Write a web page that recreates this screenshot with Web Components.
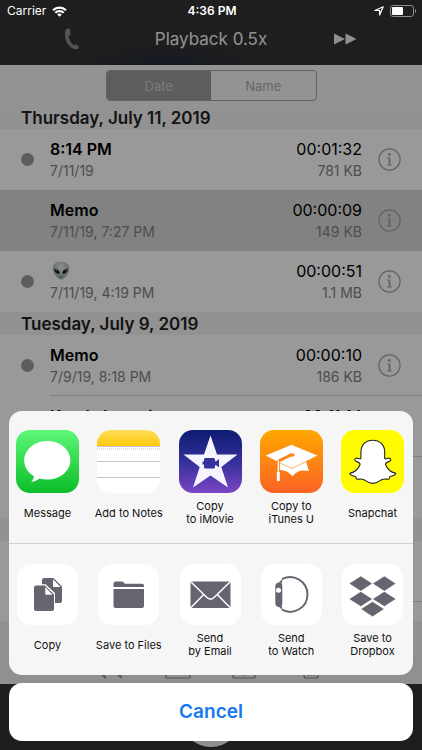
<!DOCTYPE html>
<html lang="en">
<head>
<meta charset="utf-8">
<meta name="viewport" content="width=device-width, initial-scale=1">
<title>Voice Memos</title>
<style>
  body {
    margin: 0;
    font-family: Inter, "Liberation Sans", sans-serif;
    background: #333;
  }
</style>
</head>
<body>
<memo-app></memo-app>

<script>
/**
 * Small base class: puts the element's markup into an open shadow root.
 */
class BaseElement extends HTMLElement {
  connectedCallback() {
    if (this.shadowRoot) return;
    this.attachShadow({ mode: "open" });
    this.shadowRoot.innerHTML = `
      <style>
        * { box-sizing: border-box; }
        button { font: inherit; color: inherit; background: none; border: 0; padding: 0; margin: 0; cursor: pointer; }
        svg { display: block; }
      </style>
      ${this.render()}
    `;
  }

  render() {
    return "";
  }
}

class StatusBar extends BaseElement {
  render() {
    return `
      <style>
        :host {
          display: grid;
          grid-template-columns: 1fr auto 1fr;
          align-items: center;
          height: 22px;
          padding: 0 5px 0 7px;
          color: #fff;
          font-size: 12px;
          line-height: 16px;
        }
        .left, .right { display: flex; align-items: center; gap: 6px; }
        .right { justify-content: flex-end; }
        b { font-weight: 600; }
      </style>
      <div class="left">
        <span>Carrier</span>
        <svg width="15" height="11" viewBox="0 0 15 11" fill="none" stroke="#fff" stroke-width="2.200">
          <path d="M1 4.2A9.3 9.3 0 0 1 14 4.2"/>
          <path d="M3.3 6.8A6 6 0 0 1 11.7 6.8"/>
          <path d="M7.5 10.8 5.2 8.5A3.3 3.3 0 0 1 9.8 8.5Z" fill="#fff" stroke="none"/>
        </svg>
      </div>
      <b>4:36 PM</b>
      <div class="right">
        <svg width="10" height="10" viewBox="0 0 10 10" fill="none" stroke="#fff" stroke-width="1.2" stroke-linejoin="round">
          <path d="M9.2.8 5.6 9.1V4.5H.9Z"/>
        </svg>
        <svg width="27" height="12" viewBox="0 0 27 12">
          <rect x=".5" y=".5" width="23" height="11" rx="2.6" fill="none" stroke="#8e8e8e"/>
          <rect x="2" y="2" width="11" height="8" rx="1" fill="#fff"/>
          <path d="M25 4v4c1.6-.6 1.6-3.4 0-4Z" fill="#8e8e8e"/>
        </svg>
      </div>
    `;
  }
}

class PlaybackHeader extends BaseElement {
  render() {
    return `
      <style>
        :host {
          display: block;
          padding: 22px 8px 0;
          height: 65px;
          box-sizing: border-box;
          background: radial-gradient(100px 22px at 40% 100%, #252b38, #333) #333;
          color: #eee;
        }
        nav {
          display: grid;
          grid-template-columns: 1fr 1fr 1fr;
          place-items: center;
          height: 34px;
        }
        .title { font-size: 17px; line-height: 22px; white-space: nowrap; color: #f2f2f2; }
      </style>
      <nav>
        <button aria-label="Earpiece">
          <svg width="24" height="24" viewBox="0 0 24 24" fill="#8c8c8c">
            <path d="M2 2.500C3.200 1.400 5.600 1 6.100 3L6.700 7C6.900 8.400 4.900 8.500 4.600 9.500C4.900 12.500 7.300 16.300 9.500 18.200C10.600 18.500 11.300 16.900 12.400 17.400L14.700 19.400C15.400 20.400 14.500 21.700 13 22.100C9.800 22.800 5.900 20.300 3.500 16.500C.8 12.200.1 5.500 2 2.500Z"/>
          </svg>
        </button>
        <button class="title">Playback 0.5x</button>
        <button aria-label="Fast forward">
          <svg width="24" height="12" viewBox="0 0 24 12" fill="#f0f0f0"><path d="M0 .5 11 6 0 11.500ZM11.500 .5 22.500 6 11.500 11.500Z"/></svg>
        </button>
      </nav>
    `;
  }
}

class SortControl extends BaseElement {
  render() {
    return `
      <style>
        :host { display: flex; justify-content: center; padding: 5px 0; height: 41px; box-sizing: border-box; background: #f5f5f5; }
        div { display: flex; width: 50%; border: 1px solid #a3a3a3; border-radius: 4px; overflow: hidden; }
        button { flex: 1; font-size: 13px; line-height: 16px; color: #adadad; }
        button[aria-pressed="true"] { background: #9c9c9c; color: #cbcbcb; }
      </style>
      <div>
        <button aria-pressed="true">Date</button>
        <button aria-pressed="false">Name</button>
      </div>
    `;
  }
}

class DayHeader extends BaseElement {
  render() {
    return `
      <style>
        :host {
          display: block;
          height: 23px;
          padding: 0 21px;
          background: #f3f3f3;
          color: #222;
          font-size: 17px;
          font-weight: 600;
          line-height: 24px;
          white-space: nowrap;
        }
      </style>
      <slot></slot>
    `;
  }
}

/**
 * One recording. Attributes: date, time, size, and the flags "unplayed", "selected" and "line".
 */
class MemoRow extends BaseElement {
  render() {
    const attr = (name) => this.getAttribute(name) || "";

    return `
      <style>
        :host {
          display: grid;
          grid-template-columns: 50px 1fr auto 60px;
          align-items: center;
          height: 61px;
          background: #fff;
          color: #000;
          font-size: 16px;
          line-height: 22px;
        }
        :host([selected]) { background: #d9d9d9; }
        :host([line]) { background: linear-gradient(#d2d2d2, #d2d2d2) 50px 100% / 100% 1px no-repeat #fff; }
        .dot { width: 13px; height: 13px; margin-left: 21px; border-radius: 50%; }
        :host([unplayed]) .dot { background: #9b9b9b; }
        .name { font-weight: 600; height: 22px; }
        .right { text-align: right; }
        .small { min-height: 22px; font-size: 14px; color: #828282; }
        button { margin-left: 16px; width: 23px; color: #a6a6a6; }
      </style>
      <span class="dot"></span>
      <div>
        <div class="name"><slot></slot></div>
        <div class="small">${attr("date")}</div>
      </div>
      <div class="right">
        <div>${attr("time")}</div>
        <div class="small">${attr("size")}</div>
      </div>
      <button aria-label="Details">
        <svg width="23" height="23" viewBox="0 0 23 23" fill="currentColor">
          <circle cx="11.500" cy="11.500" r="10.600" fill="none" stroke="currentColor" stroke-width="1.200"/>
          <circle cx="11.300" cy="6.400" r="1.400"/>
          <path d="M9 9.400h3.400v7.100h1.500v1H9v-1h1.600v-6.100H9Z"/>
        </svg>
      </button>
    `;
  }
}

class AlienFace extends BaseElement {
  render() {
    return `
      <style>:host { display: inline-block; padding: 1px 0 0 2px; }</style>
      <svg width="18" height="19" viewBox="0 0 18 19" role="img" aria-label="Alien">
        <defs><radialGradient id="skin" cy=".3"><stop stop-color="#e8efef"/><stop offset="1" stop-color="#a9b6b8"/></radialGradient></defs>
        <path d="M9 .5c5 0 8.300 3 8.300 7.200C17.300 12 12.500 18.500 9 18.500S.7 12 .7 7.700C.7 3.500 4 .5 9 .5Z" fill="url(#skin)"/>
        <path d="M2.300 7.800c3 .2 5 1.800 5.400 4.800-3.200.5-5.500-1.300-5.400-4.800ZM15.700 7.800c-3 .2-5 1.800-5.400 4.800 3.200.5 5.500-1.300 5.400-4.800Z" fill="#111"/>
        <path d="M3.500 9l1.500.8M14.500 9l-1.500.8" stroke="#ccc" stroke-width=".8"/>
        <path d="M7.300 15.600q1.700.9 3.400 0" fill="none" stroke="#555" stroke-width=".8"/>
      </svg>
    `;
  }
}

class EditToolbar extends BaseElement {
  render() {
    return `
      <style>
        :host {
          display: flex;
          justify-content: space-between;
          align-items: flex-end;
          height: 63px;
          padding: 0 98px 5px;
          box-sizing: border-box;
          background: #f0f0f0;
          color: #888;
        }
        svg { fill: none; stroke: currentColor; stroke-width: 1.200; }
      </style>
      <button aria-label="Trim"><svg width="26" height="26" viewBox="0 0 26 26"><path d="M3 21 7 25V3M23 25V3M17 19 23 25M3 21h4"/></svg></button>
      <button aria-label="Share"><svg width="26" height="26" viewBox="0 0 26 26"><rect x="1" y="21.500" width="24" height="3.500" rx="1"/><path d="M13 18V2M8 7l5-5 5 5"/></svg></button>
      <button aria-label="Add"><svg width="26" height="26" viewBox="0 0 26 26"><rect x="2" y="5" width="22" height="20" rx="1"/><path d="M13 10v13M7 17h12"/></svg></button>
      <button aria-label="Delete"><svg width="26" height="26" viewBox="0 0 26 26"><path d="M5 6h16M6 6v17q0 2 2 2h10q2 0 2-2V6M10 10v13M13 10v13M16 10v13"/></svg></button>
    `;
  }
}

class RecordBar extends BaseElement {
  render() {
    return `
      <style>
        :host { display: flex; justify-content: center; align-items: center; height: 66px; background: #333; }
        button { width: 60px; height: 60px; border-radius: 50%; background: #f0f0f0; }
      </style>
      <button aria-label="Record"></button>
    `;
  }
}

const ICONS = {
  message: `
    <defs><linearGradient id="g" x2="0" y2="1"><stop stop-color="#5ff777"/><stop offset="1" stop-color="#0bbd29"/></linearGradient></defs>
    <rect width="63" height="63" fill="url(#g)"/>
    <path d="M31.300 11C18.500 11 8.200 19.700 8.200 30.500c0 6.600 3.900 12.200 9.700 15.700-.2 2.400-1.200 4.100-2.900 5.600 3.400-.1 6.200-1.200 8.500-3.200 2.500.7 5.100 1 7.800 1 12.800 0 23.100-8.600 23.100-19.300S44.100 11 31.300 11Z" fill="#fff"/>`,
  notes: `
    <defs><linearGradient id="g" x2="0" y2="1"><stop stop-color="#ffdc5a"/><stop offset="1" stop-color="#fdca0a"/></linearGradient></defs>
    <rect width="63" height="63" fill="#fff"/>
    <rect width="63" height="16" fill="url(#g)"/>
    <path d="M0 16.500h63M0 31.500h63M0 47.500h63" stroke="#c6c6ca"/>
    <path d="M0 19h63" stroke="#b9b9bc" stroke-dasharray="1 1"/>`,
  imovie: `
    <defs><linearGradient id="g" x2="0" y2="1"><stop stop-color="#0c1b70"/><stop offset=".5" stop-color="#35309a"/><stop offset="1" stop-color="#7a45c4"/></linearGradient></defs>
    <rect width="63" height="63" fill="url(#g)"/>
    <path d="M31.500 5.500 38 24.500H58.500L42.300 37 49 57.500 31.500 45.500 14 57.500 20.700 37 4.500 24.500H25Z" fill="#f6f5ff"/>
    <path d="M26.500 28h8q1.500 0 1.500 1.500v1.700h1.200l2.800-2.200v8.500l-2.800-2.200H36V37q0 1.500-1.500 1.500h-8Q25 38.500 25 37v-2.500h-1.500v-3H25v-2Q25 28 26.500 28Z" fill="#35329c"/>`,
  itunesu: `
    <defs><linearGradient id="g" x2="0" y2="1"><stop stop-color="#ffa800"/><stop offset="1" stop-color="#fb6225"/></linearGradient></defs>
    <rect width="63" height="63" fill="url(#g)"/>
    <path d="M17 31 32 38 46 31.500 49 41C41.500 39.500 36.500 41 32.500 46.500 29 41.500 24 39.500 17 40Z" fill="#fff"/>
    <path d="M31.500 14.500 5 25.500 18 32 32 38.500 58 25.500Z" fill="#fff" stroke="#fd8612" stroke-width=".6"/>
    <path d="M31 25 19.500 30.500Q18.300 31.200 18.300 33V42" fill="none" stroke="#fd8516" stroke-width="3"/>
    <path d="M19 31Q18.300 31.500 18.300 33V42" fill="none" stroke="#fff" stroke-width="1.300"/>
    <path d="M30 25.200 20 30" stroke="#fd8516" stroke-width="1.600"/>
    <ellipse cx="31.500" cy="25" rx="3.200" ry="1.700" fill="#fd8516"/>
    <path d="M16.800 42h3v9h-3Z" fill="#fff"/>`,
  snapchat: `
    <rect width="63" height="63" fill="#fffc00"/>
    <path d="M31.800 10.200c7 0 11.900 4.700 11.900 12v6.300c1.600.8 3-.8 4.800-.3 2 .7 1.500 2.600-.5 3.400-1.700.7-3.900 1.200-3.400 3.200 1.600 4.200 5.400 7.400 10.200 8.600-.4 2.300-3.700 2.600-5.800 3.100-.6.7-.3 2.200-1.200 2.600-1.700.4-4-.6-6.500.3-3 1.400-5 4-9.500 4s-6.500-2.600-9.500-4c-2.500-.9-4.800.1-6.500-.3-.9-.4-.6-1.900-1.200-2.600-2.100-.5-5.400-.8-5.800-3.100 4.800-1.200 8.600-4.400 10.200-8.600.5-2-1.700-2.500-3.400-3.200-2-.8-2.500-2.700-.5-3.400 1.800-.5 3.200 1.100 4.800.3v-6.300c0-7.300 4.900-12 11.900-12Z" fill="#fff" stroke="#222" stroke-width="1.100" stroke-linejoin="round"/>`,
  copy: `
    <path d="M25 19V16q0-2 2-2h9.500L45 22.500V37q0 2-2 2H38V29L28.500 20.200H25Z" fill="#66646f"/>
    <path d="M36 15.200V23H43.500Z" fill="#fff"/>
    <path d="M19 21.500h9l9 9V45q0 2-2 2H19q-2 0-2-2V23.500q0-2 2-2Z" fill="#66646f"/>
    <path d="M28.300 23V30.800H35.500Z" fill="#fff"/>`,
  files: `
    <path d="M15.500 23V19.500q0-2 2-2h6.300q1.200 0 2 1l1 1.200H44q2 0 2 2V23Z" fill="#66646f"/>
    <path d="M15.500 25H46V42q0 2-2 2H17.500q-2 0-2-2Z" fill="#66646f"/>`,
  email: `
    <rect x="10.500" y="17.500" width="40" height="26.500" fill="#66646f"/>
    <path d="M10.500 17.500 26.700 33.300Q30.500 37 34.300 33.300L50.500 17.500M10.500 44 23.500 30.800M50.500 44 37.500 30.800" fill="none" stroke="#fff" stroke-width="1.500"/>`,
  watch: `
    <path d="M21 15.200A17.300 17.300 0 1 1 21 45.700" fill="none" stroke="#66646f" stroke-width="1.900"/>
    <path d="M21.500 15 17.500 18.800H21ZM21.500 46 17.500 42.500H21Z" fill="#66646f"/>
    <path d="M17.500 18.500H20Q21.300 19.500 21.300 22V39.500Q21.300 42 20 43H17.500Q14.300 42.500 14.300 39V22.500Q14.300 19 17.500 18.500Z" fill="#66646f"/>
    <circle cx="17.500" cy="26.300" r="2.500" fill="#fff"/>`,
  dropbox: `
    <path d="M18.800 12 30.500 19.600 18.800 27.200 7 19.600ZM42.300 12 54 19.600 42.300 27.200 30.500 19.600ZM18.800 27.400 30.500 35 18.800 42.600 7 35ZM42.300 27.400 54 35 42.300 42.600 30.500 35ZM30.500 37.500 42.300 45 30.500 52.800 18.800 45Z" fill="#66646f" stroke="#fff" stroke-width=".6"/>`,
};

/**
 * A tappable share target. "app" items have a coloured 63px icon, the others a white 61px tile.
 */
class ShareItem extends BaseElement {
  render() {
    const size = this.hasAttribute("app") ? 63 : 61;

    return `
      <style>
        :host { display: block; width: 73px; }
        button { display: flex; flex-direction: column; align-items: center; gap: 6px; width: 100%; }
        svg { border-radius: 14px; background: #fff; }
        .label {
          display: flex;
          align-items: center;
          height: 28px;
          color: #111;
          font-size: 11px;
          line-height: 13px;
          text-align: center;
          white-space: nowrap;
        }
      </style>
      <button>
        <svg width="${size}" height="${size}" viewBox="0 0 ${size} ${size}" aria-hidden="true">${ICONS[this.getAttribute("icon")]}</svg>
        <span class="label"><span><slot></slot></span></span>
      </button>
    `;
  }
}

class ShareSheet extends BaseElement {
  render() {
    return `
      <style>
        :host { display: flex; flex-direction: column; gap: 8px; padding: 0 9px 9px; }
        .panel { border-radius: 13px; background: #f6f6f7; }
        .row { display: flex; justify-content: space-between; height: 132px; padding: 19px 4px 0 2px; }
        .row + .row { border-top: 1px solid #d3d3d7; padding-top: 20px; }
        .cancel {
          height: 58px;
          border-radius: 13px;
          background: #fff;
          color: #1478f0;
          font-size: 19px;
          font-weight: 600;
          line-height: 24px;
        }
      </style>
      <div class="panel">
        <div class="row">
          <share-item app icon="message">Message</share-item>
          <share-item app icon="notes">Add to Notes</share-item>
          <share-item app icon="imovie">Copy<br>to iMovie</share-item>
          <share-item app icon="itunesu">Copy to<br>iTunes U</share-item>
          <share-item app icon="snapchat">Snapchat</share-item>
        </div>
        <div class="row">
          <share-item icon="copy">Copy</share-item>
          <share-item icon="files">Save to Files</share-item>
          <share-item icon="email">Send<br>by Email</share-item>
          <share-item icon="watch">Send<br>to Watch</share-item>
          <share-item icon="dropbox">Save to<br>Dropbox</share-item>
        </div>
      </div>
      <button class="cancel">Cancel</button>
    `;
  }
}

class MemoApp extends BaseElement {
  render() {
    return `
      <style>
        :host { display: flex; flex-direction: column; position: relative; height: 100vh; overflow: hidden; }
        .list { flex: 1; min-height: 0; overflow: hidden; background: #fff; }
        playback-header, sort-control, edit-toolbar, record-bar { flex: none; }
        .dim { position: absolute; inset: 0; background: rgba(0, 0, 0, 0.4); }
        status-bar { position: absolute; top: 0; left: 0; right: 0; }
        share-sheet { position: absolute; bottom: 0; left: 0; right: 0; }
      </style>
      <playback-header></playback-header>
      <sort-control></sort-control>
      <div class="list">
        <day-header>Thursday, July 11, 2019</day-header>
        <memo-row unplayed date="7/11/19" time="00:01:32" size="781 KB">8:14 PM</memo-row>
        <memo-row selected date="7/11/19, 7:27 PM" time="00:00:09" size="149 KB">Memo</memo-row>
        <memo-row unplayed date="7/11/19, 4:19 PM" time="00:00:51" size="1.1 MB"><alien-face></alien-face></memo-row>
        <day-header>Tuesday, July 9, 2019</day-header>
        <memo-row unplayed line date="7/9/19, 8:18 PM" time="00:00:10" size="186 KB">Memo</memo-row>
        <memo-row line time="00:11:14">Kate's Interview</memo-row>
        <memo-row></memo-row>
        <day-header></day-header>
        <memo-row line></memo-row>
      </div>
      <edit-toolbar></edit-toolbar>
      <record-bar></record-bar>
      <div class="dim"></div>
      <status-bar></status-bar>
      <share-sheet></share-sheet>
    `;
  }
}

customElements.define("status-bar", StatusBar);
customElements.define("playback-header", PlaybackHeader);
customElements.define("sort-control", SortControl);
customElements.define("day-header", DayHeader);
customElements.define("memo-row", MemoRow);
customElements.define("alien-face", AlienFace);
customElements.define("edit-toolbar", EditToolbar);
customElements.define("record-bar", RecordBar);
customElements.define("share-item", ShareItem);
customElements.define("share-sheet", ShareSheet);
customElements.define("memo-app", MemoApp);
</script>
</body>
</html>
